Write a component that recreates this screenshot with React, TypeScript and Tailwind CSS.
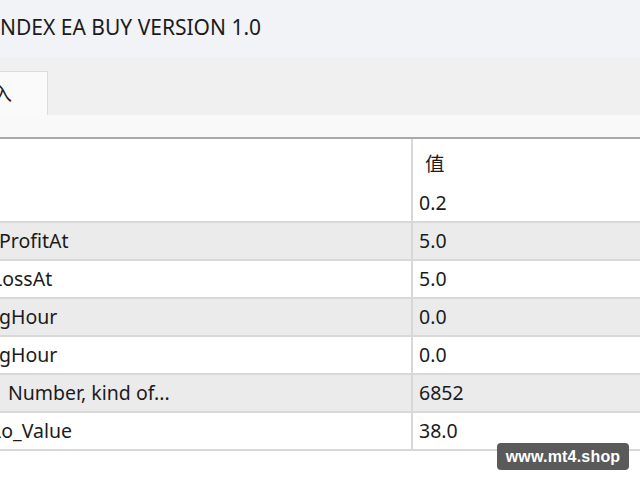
const rows: { name: string; shift: string; value: string }[] = [
   { name: "", shift: "ml-0", value: "0.2" },
   { name: "ProfitAt", shift: "-ml-[1px]", value: "5.0" },
   { name: "LossAt", shift: "-ml-[8px]", value: "5.0" },
   { name: "gHour", shift: "-ml-[1px]", value: "0.0" },
   { name: "gHour", shift: "-ml-[1px]", value: "0.0" },
   { name: "Number, kind of...", shift: "ml-[8px]", value: "6852" },
   { name: "Lo_Value", shift: "-ml-[9px]", value: "38.0" },
]

export default function App() {
   return (
      <div className="relative w-[640px] h-[480px] overflow-hidden bg-white text-[#1b1b1b] font-['Noto_Sans','Noto_Sans_CJK_SC',sans-serif]">
         {/* window title */}
         <div className="h-[57px] bg-[#f2f3f7] flex items-center pb-[1px] text-[21px] whitespace-nowrap">
            NDEX EA BUY VERSION 1.0
         </div>

         {/* tab strip */}
         <div className="h-[58px] bg-[#f0f0f0] flex items-end">
            <div className="w-[48px] h-[44px] bg-[#fafafa] border-t border-r border-[#dcdcdc] overflow-hidden flex items-center">
               <span className="-ml-[7px] text-[19px] font-['Noto_Sans_CJK_SC',sans-serif]">入</span>
            </div>
         </div>
         <div className="h-[22px] bg-[#f9f9f9]" />
         <div className="h-[2px] bg-[#a9a9a9]" />

         {/* parameter table */}
         <div className="grid grid-cols-[413px_1fr] text-[19.5px]">
            <div className="h-[46px] border-r-2 border-[#d8d8d8]" />
            <div className="h-[46px] flex items-center pl-[12px] pt-[2px] font-['Noto_Sans_CJK_SC',sans-serif]">值</div>
            {rows.map((r, i) => (
               <Row key={i} index={i} {...r} />
            ))}
         </div>

         {/* watermark */}
         <div className="absolute left-[497px] top-[443px] w-[132px] h-[27px] rounded-[4px] bg-[#5a5a5a] text-white flex items-center justify-center font-['Liberation_Sans',sans-serif] font-bold text-[16px] tracking-[0.2px]">
            www.mt4.shop
         </div>
      </div>
   )
}

function Row({ index, name, shift, value }: { index: number; name: string; shift: string; value: string }) {
   const bg = index % 2 === 1 ? "bg-[#ebebeb]" : "bg-white"
   return (
      <>
         <div className={`h-[38px] border-b-2 border-r-2 border-[#d8d8d8] ${bg} flex items-center overflow-hidden whitespace-nowrap`}>
            <span className={shift}>{name}</span>
         </div>
         <div className={`h-[38px] border-b-2 border-[#d8d8d8] ${bg} flex items-center pl-[6px]`}>
            {value}
         </div>
      </>
   )
}
